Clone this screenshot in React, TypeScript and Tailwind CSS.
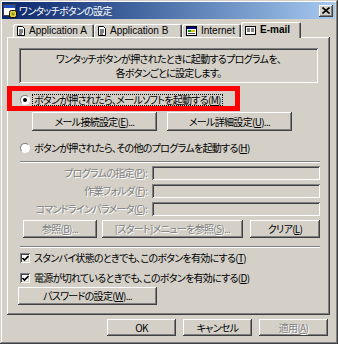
import type { ReactNode } from "react";

const raised =
  "bg-[#d4d0c8] shadow-[inset_-1px_-1px_#404040,inset_1px_1px_#ffffff,inset_-2px_-2px_#808080,inset_2px_2px_#d4d0c8]";
const sunken =
  "shadow-[inset_1px_1px_#808080,inset_-1px_-1px_#ffffff,inset_2px_2px_#404040,inset_-2px_-2px_#d4d0c8]";
const dis = "text-[#808080] [text-shadow:1px_1px_0_#ffffff]";

function Mn({ c }: { c: string }) {
  return (
    <>
      (<u className="underline-offset-1">{c}</u>)
    </>
  );
}

function Btn({
  children,
  className = "",
  disabled = false,
}: {
  children: ReactNode;
  className?: string;
  disabled?: boolean;
}) {
  return (
    <div
      className={`${raised} flex shrink-0 items-center justify-center whitespace-nowrap leading-none ${
        disabled ? dis : "text-black"
      } ${className}`}
    >
      {children}
    </div>
  );
}

function Radio({ on = false }: { on?: boolean }) {
  return (
    <span className="flex h-[10px] w-[10px] shrink-0 items-center justify-center rounded-full border border-t-[#808080] border-l-[#808080] border-r-white border-b-white bg-white">
      {on && <span className="h-[4px] w-[4px] rounded-full bg-black" />}
    </span>
  );
}

function Check() {
  return (
    <span className={`flex h-[10px] w-[10px] shrink-0 items-center justify-center bg-white ${sunken}`}>
      <svg width="7" height="7" viewBox="0 0 7 7">
        <path d="M0.5 3 L2.5 5 L6.5 1" stroke="#000" strokeWidth="1.6" fill="none" />
      </svg>
    </span>
  );
}

function DocIcon() {
  return (
    <svg width="8" height="10" viewBox="0 0 8 10" className="shrink-0">
      <path d="M0.5 0.5 H5.5 L7.5 2.5 V9.5 H0.5 Z" fill="#fff" stroke="#000" />
      <path d="M2 4 H6 M2 6 H6 M2 8 H5" stroke="#000" />
    </svg>
  );
}

function NetIcon() {
  return (
    <svg width="11" height="10" viewBox="0 0 11 10" className="shrink-0">
      <rect x="0.5" y="0.5" width="10" height="9" fill="#fff" stroke="#000" />
      <rect x="1" y="1" width="9" height="2" fill="#000080" />
      <rect x="2" y="4" width="3" height="2" fill="#00a000" />
      <rect x="5" y="4" width="4" height="2" fill="#e0c000" />
      <path d="M2 7.5 H9" stroke="#404040" />
    </svg>
  );
}

function MailIcon() {
  return (
    <svg width="11" height="9" viewBox="0 0 11 9" className="shrink-0">
      <rect x="0.5" y="0.5" width="10" height="8" fill="#fff" stroke="#000" />
      <path d="M2 3 H5 M2 5 H5 M6 3 H9 M6 5 H9" stroke="#000" />
    </svg>
  );
}

function TitleIcon() {
  return (
    <svg width="14" height="14" viewBox="0 0 14 14" className="shrink-0">
      <rect x="0.5" y="0.5" width="12" height="11" fill="#fff" stroke="#404040" />
      <rect x="1" y="1" width="11" height="3" fill="#2050c0" />
      <rect x="6.5" y="6.5" width="7" height="7" rx="2" fill="#f0d040" stroke="#000" />
      <rect x="8.5" y="8.5" width="3" height="3" fill="#80a020" />
    </svg>
  );
}

function Tab({
  icon,
  label,
  w,
  selected = false,
}: {
  icon: ReactNode;
  label: string;
  w: string;
  selected?: boolean;
}) {
  return (
    <div
      className={`${w} flex items-center gap-[4px] rounded-t-[2px] bg-[#d4d0c8] pl-[4px] shadow-[inset_1px_1px_#ffffff,inset_-1px_0_#404040,inset_-2px_0_#808080] ${
        selected ? "relative z-10 -mb-[1px] h-[16px] font-bold" : "h-[13px]"
      }`}
    >
      {icon}
      <span className="font-['Liberation_Sans',sans-serif] text-[10px] leading-none tracking-normal text-black">
        {label}
      </span>
    </div>
  );
}

function Field() {
  return <div className={`h-[14px] w-[168px] bg-[#d4d0c8] ${sunken}`} />;
}

export default function App() {
  return (
    <div className="relative h-[344px] w-[338px] overflow-hidden bg-[#d4d0c8] font-['Noto_Sans_CJK_JP',sans-serif] text-[10px] tracking-[-0.7px] text-black [font-feature-settings:'palt'] shadow-[inset_-1px_-1px_#404040,inset_1px_1px_#d4d0c8,inset_-2px_-2px_#808080,inset_2px_2px_#ffffff]">
      {/* title bar */}
      <div className="ml-[2px] mr-[3px] mt-[2px] flex h-[17px] items-center bg-gradient-to-r from-[#0a246a] to-[#a6caf0] pl-[1px] pr-[2px]">
        <TitleIcon />
        <span className="ml-[2px] leading-none text-white">ワンタッチボタンの設定</span>
        <div className={`${raised} ml-auto flex h-[12px] w-[14px] items-center justify-center`}>
          <svg width="8" height="7" viewBox="0 0 8 7">
            <path d="M0.5 0.5 L7.5 6.5 M7.5 0.5 L0.5 6.5" stroke="#000" strokeWidth="1.6" />
          </svg>
        </div>
      </div>

      {/* tabs */}
      <div className="ml-[13px] mt-[3px] flex h-[15px] items-end">
        <Tab w="w-[81px]" icon={<DocIcon />} label="Application A" />
        <Tab w="w-[88px]" icon={<DocIcon />} label="Application B" />
        <Tab w="w-[59px]" icon={<NetIcon />} label="Internet" />
        <Tab w="w-[60px]" icon={<MailIcon />} label="E-mail" selected />
      </div>

      {/* panel */}
      <div className="ml-[7px] flex h-[278px] w-[323px] flex-col pl-[12px] shadow-[inset_-1px_-1px_#404040,inset_1px_1px_#ffffff,inset_-2px_-2px_#808080]">
        <div className={`mt-[11px] flex h-[35px] w-[299px] flex-col items-center justify-center gap-[2px] leading-[12px] ${sunken}`}>
          <span>ワンタッチボタンが押されたときに起動するプログラムを、</span>
          <span>各ボタンごとに設定します。</span>
        </div>

        <div className="ml-[1px] mt-[10px] flex h-[14px] items-center">
          <Radio on />
          <span className="ml-[2px] border border-dotted border-black px-[1px] leading-[10px]">
            ボタンが押されたら、メールソフトを起動する<Mn c="M" />
          </span>
        </div>

        <div className="ml-[13px] mt-[5px] flex h-[19px] gap-[10px]">
          <Btn className="w-[125px]">
            メール接続設定<Mn c="E" />...
          </Btn>
          <Btn className="w-[125px]">
            メール詳細設定<Mn c="U" />...
          </Btn>
        </div>

        <div className="ml-[1px] mt-[10px] flex h-[14px] items-center">
          <Radio />
          <span className="ml-[4px] leading-none">
            ボタンが押されたら、その他のプログラムを起動する<Mn c="H" />
          </span>
        </div>

        <div className="ml-[1px] mt-[6px] h-[2px] w-[300px] border-t border-b border-t-[#808080] border-b-white" />

        <div className="mt-[3px] flex flex-col gap-[4px]">
          {[
            ["プログラムの指定", "P"],
            ["作業フォルダ", "F"],
            ["コマンドラインパラメータ", "C"],
          ].map(([t, c]) => (
            <div key={c} className="flex h-[14px] items-center">
              <span className={`w-[128px] whitespace-nowrap text-right leading-none ${dis}`}>
                {t}
                <Mn c={c} />:
              </span>
              <span className="w-[5px]" />
              <Field />
            </div>
          ))}
        </div>

        <div className="ml-[4px] mt-[4px] flex h-[18px]">
          <Btn className="w-[74px]" disabled>
            参照<Mn c="B" />...
          </Btn>
          <Btn className="ml-[5px] w-[141px]" disabled>
            [スタート]メニューを参照<Mn c="S" />...
          </Btn>
          <Btn className="ml-[7px] w-[70px]">
            クリア<Mn c="L" />
          </Btn>
        </div>

        <div className="ml-[1px] mt-[8px] h-[2px] w-[300px] border-t border-b border-t-[#808080] border-b-white" />

        <div className="ml-[1px] mt-[3px] flex h-[14px] items-center">
          <Check />
          <span className="ml-[4px] leading-none">
            スタンバイ状態のときでも、このボタンを有効にする<Mn c="T" />
          </span>
        </div>
        <div className="ml-[1px] mt-[6px] flex h-[14px] items-center">
          <Check />
          <span className="ml-[4px] leading-none">
            電源が切れているときでも、このボタンを有効にする<Mn c="D" />
          </span>
        </div>

        <Btn className="-ml-[1px] mt-[2px] h-[18px] w-[139px]">
          パスワードの設定<Mn c="W" />...
        </Btn>
      </div>

      {/* dialog buttons */}
      <div className="mt-[4px] flex h-[17px] justify-end gap-[7px] pr-[10px]">
        <Btn className="w-[69px]">OK</Btn>
        <Btn className="w-[69px]">キャンセル</Btn>
        <Btn className="w-[69px]" disabled>
          適用<Mn c="A" />
        </Btn>
      </div>

      {/* red highlight annotation */}
      <div className="pointer-events-none absolute left-[7px] top-[86px] h-[25px] w-[233px] border-[5px] border-[#ff0000]" />
    </div>
  );
}
